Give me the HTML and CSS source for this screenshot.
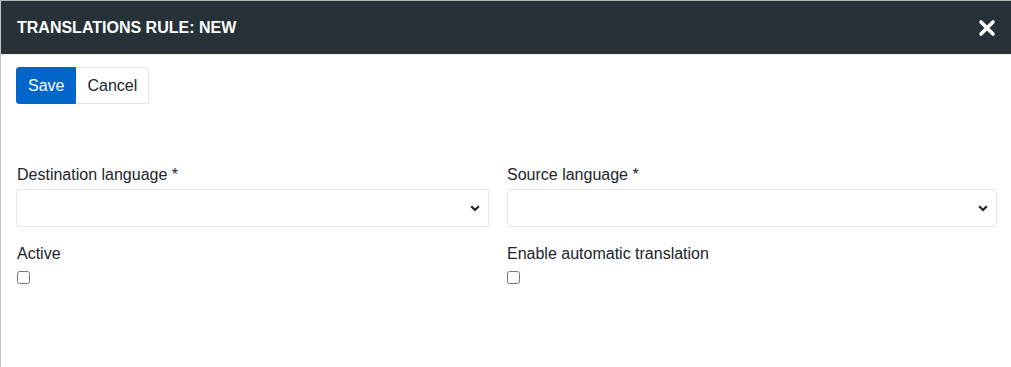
FILE: index.html
```html
<!DOCTYPE html>
<html lang="en">
<head>
  <meta charset="UTF-8" />
  <title>Translations rule: new</title>
  <link rel="stylesheet" href="styles.css">
</head>
<body>
  <div class="dialog">
    <div class="dialog-header">
      <h2>TRANSLATIONS RULE: NEW</h2>
      <button class="close-btn" aria-label="Close">
        <svg width="18" height="18" viewBox="0 0 18 18">
          <path d="M3 3 L15 15 M15 3 L3 15" stroke="#fff" stroke-width="3.6" stroke-linecap="round"/>
        </svg>
      </button>
    </div>

    <div class="dialog-body">
      <div class="btn-group">
        <button class="btn btn-primary">Save</button>
        <button class="btn btn-default">Cancel</button>
      </div>

      <div class="form-grid">
        <div class="field">
          <label for="destLang">Destination language *</label>
          <select id="destLang"></select>
        </div>
        <div class="field">
          <label for="srcLang">Source language *</label>
          <select id="srcLang"></select>
        </div>
        <div class="field">
          <label for="active">Active</label>
          <input type="checkbox" id="active" />
        </div>
        <div class="field">
          <label for="autoTrans">Enable automatic translation</label>
          <input type="checkbox" id="autoTrans" />
        </div>
      </div>
    </div>
  </div>
</body>
</html>
```

FILE: styles.css
```css
body {
  margin: 0;
  padding: 0;
  font-family: "Liberation Sans", Arial, sans-serif;
  color: #212529;
  background: #fff;
}

.dialog {
  height: 367px;
  box-sizing: border-box;
  border-top: 1px solid #b5b5b5;
  border-left: 1px solid #c4c4c4;
}

.dialog-header {
  background: #263238;
  height: 53px;
  display: flex;
  align-items: center;
  justify-content: space-between;
  padding: 0 15px 0 16px;
  border-bottom: 1px solid #eceeef;
}

.dialog-header h2 {
  margin: 0;
  color: #fff;
  font-size: 16px;
  font-weight: bold;
}

.close-btn {
  background: none;
  border: none;
  padding: 0;
  width: 18px;
  height: 18px;
  cursor: pointer;
  display: flex;
}

.dialog-body {
  padding: 12px 14px 0 15px;
}

.btn-group {
  display: flex;
}

.btn {
  font-family: inherit;
  font-size: 16px;
  height: 37px;
  padding: 0 11px;
  border: 1px solid #e2e2e2;
  cursor: pointer;
}

.btn-primary {
  background: #0066cc;
  border-color: #0066cc;
  color: #fff;
  border-radius: 3px 0 0 3px;
}

.btn-default {
  background: #fff;
  color: #212529;
  border-left: none;
  border-radius: 0 3px 3px 0;
}

.form-grid {
  display: grid;
  grid-template-columns: 473px 490px;
  column-gap: 18px;
  row-gap: 15px;
  margin-top: 59px;
}

.field label {
  display: block;
  font-size: 16px;
  line-height: 24px;
  margin-bottom: 2px;
}

.field:nth-child(odd) label {
  padding-left: 1px;
}

.field select {
  width: 100%;
  height: 38px;
  border: 1px solid #e6e6e6;
  background: #fff url("data:image/svg+xml;utf8,<svg xmlns='http://www.w3.org/2000/svg' width='10' height='7' viewBox='0 0 10 7'><path d='M1.2 1.2 L5 5 L8.8 1.2' stroke='%23222' stroke-width='2.2' fill='none'/></svg>") no-repeat right 8px center;
  appearance: none;
  border-radius: 2px;
}

.field input[type="checkbox"] {
  margin: 3px 0 0 0;
  width: 13px;
  height: 13px;
}

.field:nth-child(odd) input[type="checkbox"] {
  margin-left: 1px;
}
```
